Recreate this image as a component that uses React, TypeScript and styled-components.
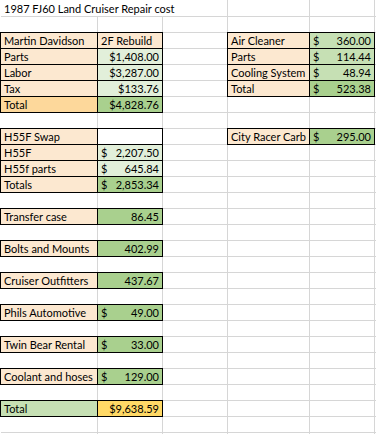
import React from 'react';
import styled, { createGlobalStyle } from 'styled-components';

const GlobalStyle = createGlobalStyle`
  html, body { margin: 0; padding: 0; background: #fff; overflow: hidden; }
  body { padding-left: 1px; font-family: Lato, "Liberation Sans", sans-serif; }
`;

const PEACH = '#fce8d0';
const ORANGE = '#fdd89b';
const LIGHT_GREEN = '#e2efda';
const MID_GREEN = '#c6e0b4';
const GREEN = '#a9d08e';
const GOLD = '#ffd966';

type Align = 'left' | 'right' | 'split';

const Sheet = styled.div`
  display: grid;
  grid-template-columns: 96px 64px 64px 81px 64px 1fr;
  grid-template-rows: 16px;
  grid-auto-rows: 15px;
  gap: 1px;
  background: #d6d6d6;
  font-size: 11px;
  color: #000;
`;

const Cell = styled.div<{ $bg?: string; $bordered?: boolean; $span?: number; $align?: Align }>`
  grid-column: span ${(p) => p.$span ?? 1};
  background: ${(p) => p.$bg ?? '#fff'};
  outline: ${(p) => (p.$bordered ? '1px solid #000' : 'none')};
  display: flex;
  align-items: center;
  justify-content: ${(p) =>
    p.$align === 'right' ? 'flex-end' : p.$align === 'split' ? 'space-between' : 'flex-start'};
  padding: 0 3px;
  line-height: 15px;
  white-space: nowrap;
  min-width: 0;
`;

const Title = styled(Cell)`
  font-size: 11px;
`;

type CellDef = {
  text?: string;
  amount?: string;
  bg?: string;
  bordered?: boolean;
  align?: Align;
};

type RowDef = (CellDef | null)[];

const label = (text: string, bg = PEACH): CellDef => ({ text, bg, bordered: true, align: 'left' });
const money = (text: string, bg: string): CellDef => ({ text, bg, bordered: true, align: 'right' });
const acct = (amount: string, bg: string): CellDef => ({ text: '$', amount, bg, bordered: true, align: 'split' });

const rows: RowDef[] = [
  [],
  [],
  [label('Martin Davidson'), label('2F Rebuild'), null, label('Air Cleaner'), acct('360.00', MID_GREEN)],
  [label('Parts'), money('$1,408.00', LIGHT_GREEN), null, label('Parts'), acct('114.44', MID_GREEN)],
  [label('Labor'), money('$3,287.00', LIGHT_GREEN), null, label('Cooling System'), acct('48.94', MID_GREEN)],
  [label('Tax'), money('$133.76', LIGHT_GREEN), null, label('Total'), acct('523.38', GREEN)],
  [label('Total', ORANGE), money('$4,828.76', GREEN)],
  [],
  [label('H55F Swap'), { bordered: true, bg: '#fff' }, null, label('City Racer Carb'), acct('295.00', GREEN)],
  [label('H55F'), acct('2,207.50', LIGHT_GREEN)],
  [label('H55f parts'), acct('645.84', LIGHT_GREEN)],
  [label('Totals'), acct('2,853.34', GREEN)],
  [],
  [label('Transfer case'), money('86.45', GREEN)],
  [],
  [label('Bolts and Mounts'), money('402.99', GREEN)],
  [],
  [label('Cruiser Outfitters'), money('437.67', GREEN)],
  [],
  [label('Phils Automotive'), acct('49.00', GREEN)],
  [],
  [label('Twin Bear Rental'), acct('33.00', GREEN)],
  [],
  [label('Coolant and hoses'), acct('129.00', GREEN)],
  [],
  [label('Total', MID_GREEN), money('$9,638.59', GOLD)],
  [],
  [],
];

const COLS = 6;

export default function App() {
  return (
    <>
      <GlobalStyle />
      <Sheet>
        {rows.map((row, r) => {
          if (r === 0) {
            return (
              <React.Fragment key={r}>
                <Title $span={3}>1987 FJ60 Land Cruiser Repair cost</Title>
                <Cell />
                <Cell />
                <Cell />
              </React.Fragment>
            );
          }
          const cells: React.ReactNode[] = [];
          for (let c = 0; c < COLS; c++) {
            const def = row[c];
            if (!def) {
              cells.push(<Cell key={`${r}-${c}`} />);
              continue;
            }
            cells.push(
              <Cell key={`${r}-${c}`} $bg={def.bg} $bordered={def.bordered} $align={def.align}>
                {def.text && <span>{def.text}</span>}
                {def.amount && <span>{def.amount}</span>}
              </Cell>
            );
          }
          return <React.Fragment key={r}>{cells}</React.Fragment>;
        })}
      </Sheet>
    </>
  );
}
